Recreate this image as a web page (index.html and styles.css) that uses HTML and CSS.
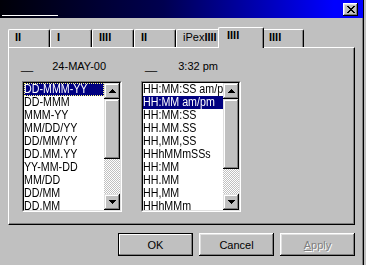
FILE: index.html
```html
<!DOCTYPE html>
<html>
<head>
<meta charset="utf-8">
<link rel="stylesheet" href="styles.css">
</head>
<body>
<div class="window">
  <div class="titlebar">
    <span class="title"></span>
    <span class="close">
      <svg width="8" height="7" viewBox="0 0 8 7" shape-rendering="crispEdges"><path fill="#000" d="M0 0h2v1h-2zM6 0h2v1h-2zM1 1h2v1h-2zM5 1h2v1h-2zM2 2h4v1h-4zM3 3h2v1h-2zM2 4h4v1h-4zM1 5h2v1h-2zM5 5h2v1h-2zM0 6h2v1h-2zM6 6h2v1h-2z"/></svg>
    </span>
  </div>
  <div class="tabs">
    <div class="tab"><span class="bar">II</span></div>
    <div class="tab"><span class="bar">I</span></div>
    <div class="tab"><span class="bar">IIII</span></div>
    <div class="tab"><span class="bar">II</span></div>
    <div class="tab wide">iPex<span class="bar">IIII</span></div>
    <div class="tab sel"><span class="bar">IIII</span></div>
    <div class="tab"><span class="bar">IIII</span></div>
  </div>
  <div class="panel">
    <div class="col">
      <div class="label"><span class="u u1">__</span><span class="t1">24-MAY-00</span></div>
      <div class="list">
        <div class="list-in">
          <div class="items">
            <div class="item sel focus"><span>DD-MMM-YY</span></div>
            <div class="item"><span>DD-MMM</span></div>
            <div class="item"><span>MMM-YY</span></div>
            <div class="item"><span>MM/DD/YY</span></div>
            <div class="item"><span>DD/MM/YY</span></div>
            <div class="item"><span>DD.MM.YY</span></div>
            <div class="item"><span>YY-MM-DD</span></div>
            <div class="item"><span>MM/DD</span></div>
            <div class="item"><span>DD/MM</span></div>
            <div class="item"><span>DD.MM</span></div>
          </div>
          <div class="sb">
            <div class="arrow btn3d"><svg width="7" height="4" viewBox="0 0 7 4" shape-rendering="crispEdges"><path fill="#000" d="M3 0h1v1h-1zM2 1h3v1h-3zM1 2h5v1h-5zM0 3h7v1h-7z"/></svg></div>
            <div class="thumb btn3d t60"></div>
            <div class="track"></div>
            <div class="arrow btn3d"><svg width="7" height="4" viewBox="0 0 7 4" shape-rendering="crispEdges"><path fill="#000" d="M0 0h7v1h-7zM1 1h5v1h-5zM2 2h3v1h-3zM3 3h1v1h-1z"/></svg></div>
          </div>
        </div>
      </div>
    </div>
    <div class="col">
      <div class="label"><span class="u u2">__</span><span class="t2">3:32 pm</span></div>
      <div class="list">
        <div class="list-in">
          <div class="items">
            <div class="item"><span>HH:MM:SS am/pm</span></div>
            <div class="item sel"><span>HH:MM am/pm</span></div>
            <div class="item"><span>HH:MM:SS</span></div>
            <div class="item"><span>HH.MM.SS</span></div>
            <div class="item"><span>HH,MM,SS</span></div>
            <div class="item"><span>HHhMMmSSs</span></div>
            <div class="item"><span>HH:MM</span></div>
            <div class="item"><span>HH.MM</span></div>
            <div class="item"><span>HH,MM</span></div>
            <div class="item"><span>HHhMMm</span></div>
          </div>
          <div class="sb">
            <div class="arrow btn3d"><svg width="7" height="4" viewBox="0 0 7 4" shape-rendering="crispEdges"><path fill="#000" d="M3 0h1v1h-1zM2 1h3v1h-3zM1 2h5v1h-5zM0 3h7v1h-7z"/></svg></div>
            <div class="thumb btn3d t70"></div>
            <div class="track"></div>
            <div class="arrow btn3d"><svg width="7" height="4" viewBox="0 0 7 4" shape-rendering="crispEdges"><path fill="#000" d="M0 0h7v1h-7zM1 1h5v1h-5zM2 2h3v1h-3zM3 3h1v1h-1z"/></svg></div>
          </div>
        </div>
      </div>
    </div>
  </div>
  <div class="buttons">
    <div class="pb def">OK</div>
    <div class="pb">Cancel</div>
    <div class="pb dis"><span><u>A</u>pply</span></div>
  </div>
</div>
</body>
</html>
```
FILE: styles.css
```css
* { box-sizing: border-box; }
html, body { margin: 0; padding: 0; }
body {
  width: 366px;
  height: 265px;
  overflow: hidden;
  background: #c0c0c0;
  font-family: "Liberation Sans", Arial, sans-serif;
  font-size: 11px;
  color: #000;
}
.window {
  width: 364px;
  height: 265px;
  border-right: 1px solid #000;
  box-shadow: inset -1px 0 #808080;
}
.titlebar {
  height: 18px;
  display: flex;
  align-items: flex-start;
  background: linear-gradient(to right, #000008 0%, #000050 45%, #0000ff 92%);
}
.title {
  width: 56px;
  height: 16px;
  margin-left: 2px;
  border-bottom: 1px solid #fff;
}
.close {
  margin-left: auto;
  margin-top: 3px;
  margin-right: 5px;
  width: 15px;
  height: 13px;
  background: #c0c0c0;
  display: flex;
  align-items: center;
  justify-content: center;
  box-shadow: inset -1px -1px #000, inset 1px 1px #fff, inset -2px -2px #808080, inset 2px 2px #dfdfdf;
}
.close svg { display: block; }
.tabs {
  display: flex;
  align-items: flex-end;
  height: 18px;
  margin-top: 11px;
  padding-left: 8px;
}
.tab {
  width: 42px;
  height: 18px;
  flex: none;
  background: #c0c0c0;
  border-top: 1px solid #fff;
  border-left: 1px solid #fff;
  border-right: 1px solid #000;
  border-radius: 2px 2px 0 0;
  box-shadow: inset -1px 0 #808080;
  padding: 1px 0 0 6px;
  line-height: 13px;
  white-space: nowrap;
  overflow: hidden;
}
.tab.wide { width: 44px; }
.tab.sel {
  width: 46px;
  height: 21px;
  margin: 0 -2px -1px;
  padding-left: 8px;
  position: relative;
  z-index: 1;
}
.bar { font-weight: bold; }
.panel {
  margin-left: 8px;
  width: 347px;
  height: 178px;
  border-top: 1px solid #fff;
  border-left: 1px solid #fff;
  border-right: 1px solid #000;
  border-bottom: 1px solid #000;
  box-shadow: inset -1px -1px #808080;
  display: flex;
  padding: 12px 0 0 13px;
}
.col { width: 100px; flex: none; }
.col + .col { margin-left: 19px; }
.label {
  height: 13px;
  line-height: 13px;
  display: flex;
  white-space: nowrap;
  margin-bottom: 8px;
}
.u1 { margin-left: -1px; }
.t1 { margin-left: 19px; }
.u2 { margin-left: 4px; }
.t2 { margin-left: 21px; }
.list {
  height: 131px;
  border: 1px solid;
  border-color: #808080 #fff #fff #808080;
}
.list-in {
  height: 100%;
  border: 1px solid;
  border-color: #000 #dfdfdf #dfdfdf #000;
  background: #fff;
  display: flex;
}
.items {
  flex: 1;
  min-width: 0;
  overflow: hidden;
  font-size: 12px;
  line-height: 13px;
}
.item { height: 13px; white-space: nowrap; overflow: hidden; }
.item span {
  display: inline-block;
  transform: scaleX(0.89);
  transform-origin: 0 0;
}
.item.sel { background: #000080; color: #fff; }
.item.focus { outline: 1px dotted #ffff80; outline-offset: -1px; }
.sb {
  width: 16px;
  flex: none;
  display: flex;
  flex-direction: column;
}
.btn3d {
  background: #c0c0c0;
  box-shadow: inset -1px -1px #000, inset 1px 1px #dfdfdf, inset -2px -2px #808080, inset 2px 2px #fff;
}
.arrow {
  height: 16px;
  flex: none;
  display: flex;
  align-items: center;
  justify-content: center;
}
.arrow svg { display: block; }
.thumb { flex: none; }
.t60 { height: 60px; }
.t70 { height: 70px; }
.track {
  flex: 1;
  background: repeating-conic-gradient(#c0c0c0 0 25%, #fff 0 50%) 0 0 / 2px 2px;
}
.buttons {
  display: flex;
  justify-content: flex-end;
  gap: 6px;
  width: 355px;
  margin-top: 8px;
}
.pb {
  width: 75px;
  height: 23px;
  display: flex;
  align-items: center;
  justify-content: center;
  background: #c0c0c0;
  box-shadow: inset -1px -1px #000, inset 1px 1px #fff, inset -2px -2px #808080, inset 2px 2px #dfdfdf;
}
.pb.def {
  border: 1px solid #000;
  box-shadow: inset -1px -1px #808080, inset 1px 1px #fff, inset -2px -2px #c0c0c0, inset 2px 2px #c0c0c0;
}
.pb.dis { color: #808080; text-shadow: 1px 1px 0 #fff; }
```
